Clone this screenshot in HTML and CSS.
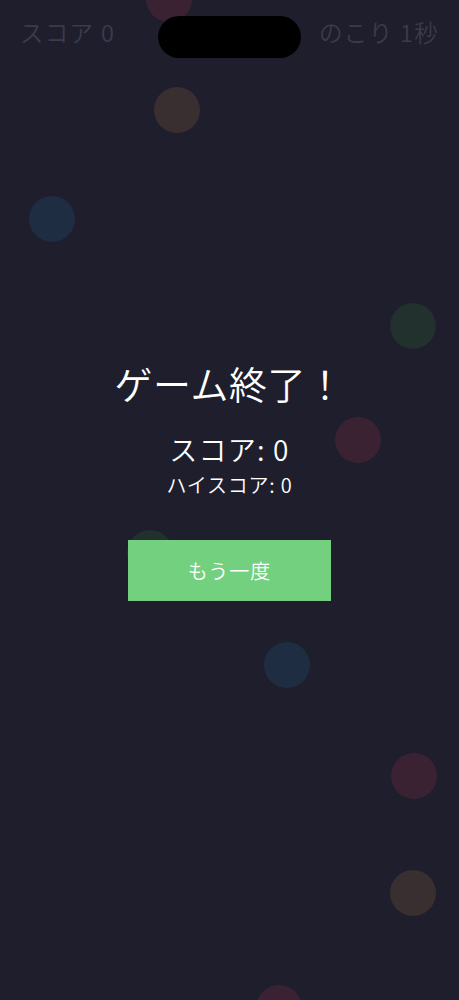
FILE: index.html
```html
<!DOCTYPE html>
<html lang="ja">
<head>
    <meta charset="UTF-8">
    <meta name="viewport" content="width=device-width, initial-scale=1.0">
    <title>バブルタップ</title>
    <link rel="stylesheet" href="styles.css">
</head>
<body>
    <div class="screen">
        <!-- floating bubbles -->
        <div class="bubble red" style="left: 146px; top: -24px;"></div>
        <div class="bubble orange" style="left: 154px; top: 87px;"></div>
        <div class="bubble blue" style="left: 29px; top: 196px;"></div>
        <div class="bubble green" style="left: 390px; top: 303px;"></div>
        <div class="bubble red" style="left: 335px; top: 417px;"></div>
        <div class="bubble green" style="left: 127px; top: 530px;"></div>
        <div class="bubble blue" style="left: 264px; top: 642px;"></div>
        <div class="bubble red" style="left: 391px; top: 753px;"></div>
        <div class="bubble orange" style="left: 390px; top: 870px;"></div>
        <div class="bubble red" style="left: 256px; top: 985px;"></div>

        <div class="hud">
            <span class="score">スコア 0</span>
            <span class="time">のこり 1秒</span>
        </div>
        <div class="notch"></div>

        <div class="result">
            <h1>ゲーム終了！</h1>
            <p class="final-score">スコア: 0</p>
            <p class="high-score">ハイスコア: 0</p>
            <button class="retry-btn">もう一度</button>
        </div>
    </div>
</body>
</html>
```

FILE: styles.css
```css
/* Base Styles */
body {
    margin: 0;
    padding: 0;
    font-family: "Noto Sans CJK JP", "Noto Sans", sans-serif;
    font-weight: 350;
    background: #1e1e2c;
    color: #fff;
}

.screen {
    position: relative;
    width: 459px;
    height: 1000px;
    overflow: hidden;
    background: #1e1e2c;
}

/* Bubbles */
.bubble {
    position: absolute;
    width: 46px;
    height: 46px;
    border-radius: 50%;
}

.bubble.red {
    background: #3a2233;
}

.bubble.orange {
    background: #3a2f30;
}

.bubble.blue {
    background: #1f2d42;
}

.bubble.green {
    background: #22302e;
}

/* Top HUD */
.hud {
    position: relative;
    display: flex;
    justify-content: space-between;
    padding: 14px 20px 0 20px;
    font-size: 23.5px;
    line-height: 36px;
    color: #3b3b4c;
    letter-spacing: 1.3px;
}

.notch {
    position: absolute;
    left: 158px;
    top: 16px;
    width: 143px;
    height: 42px;
    border-radius: 21px;
    background: #000;
}

/* Result */
.result {
    position: relative;
    display: flex;
    flex-direction: column;
    align-items: center;
    padding-top: 308px;
}

.result h1 {
    margin: 0;
    font-size: 38px;
    font-weight: 350;
    line-height: 50px;
    letter-spacing: 0.5px;
}

.final-score {
    margin: 23px 0 0;
    font-size: 28px;
    line-height: 36px;
    letter-spacing: 1.2px;
}

.high-score {
    margin: 5px 0 0;
    font-size: 20px;
    line-height: 26px;
    letter-spacing: 0.8px;
}

.retry-btn {
    margin-top: 42px;
    width: 203px;
    height: 61px;
    border: none;
    border-radius: 0;
    background: #72d07e;
    color: #fff;
    font-family: inherit;
    font-weight: 350;
    font-size: 20px;
    letter-spacing: 1px;
    cursor: pointer;
}
```
